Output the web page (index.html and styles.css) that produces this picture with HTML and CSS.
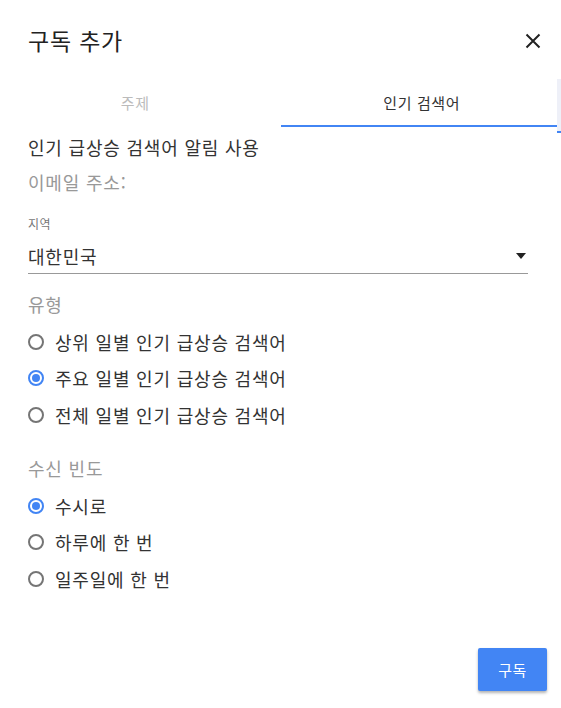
FILE: index.html
```html
<!DOCTYPE html>
<html lang="ko">
<head>
<meta charset="utf-8">
<link rel="stylesheet" href="styles.css">
</head>
<body>
<div class="dialog">
  <header class="head">
    <h1 class="title">구독 추가</h1>
    <button class="close" aria-label="닫기">
      <svg width="16" height="16" viewBox="0 0 16 16"><path d="M1.5 1.5 L14.5 14.5 M14.5 1.5 L1.5 14.5" stroke="#222" stroke-width="2" fill="none"/></svg>
    </button>
  </header>
  <div class="tabs-wrap">
    <div class="tabs">
      <div class="tab">주제</div>
      <div class="tab active">인기 검색어</div>
    </div>
    <div class="stub"></div>
  </div>
  <div class="content">
    <p class="line">인기 급상승 검색어 알림 사용</p>
    <p class="line muted">이메일 주소:</p>
    <div class="select">
      <div class="select-label">지역</div>
      <div class="select-field">
        <span>대한민국</span>
        <span class="caret"></span>
      </div>
    </div>
    <div class="group">
      <div class="group-title">유형</div>
      <label class="radio"><span class="dot"></span>상위 일별 인기 급상승 검색어</label>
      <label class="radio"><span class="dot on"></span>주요 일별 인기 급상승 검색어</label>
      <label class="radio"><span class="dot"></span>전체 일별 인기 급상승 검색어</label>
    </div>
    <div class="group">
      <div class="group-title">수신 빈도</div>
      <label class="radio"><span class="dot on"></span>수시로</label>
      <label class="radio"><span class="dot"></span>하루에 한 번</label>
      <label class="radio"><span class="dot"></span>일주일에 한 번</label>
    </div>
  </div>
  <footer class="foot">
    <button class="primary">구독</button>
  </footer>
</div>
</body>
</html>
```
FILE: styles.css
```css
* { box-sizing: border-box; }
html, body { margin: 0; padding: 0; background: #fff; }
body {
  font-family: "Noto Sans CJK KR", "Noto Sans", sans-serif;
  color: #333;
  width: 561px;
  height: 708px;
  overflow: hidden;
}
.dialog { display: flex; flex-direction: column; height: 708px; }
.head {
  display: flex;
  justify-content: space-between;
  align-items: flex-start;
  padding: 24px 18px 0 28px;
  height: 79px;
}
.title {
  margin: 0;
  font-size: 23px;
  font-weight: 400;
  line-height: 32px;
  letter-spacing: 0.8px;
  color: #222;
}
.close {
  border: 0;
  background: none;
  padding: 0;
  margin-top: 9px;
  width: 16px;
  height: 16px;
  margin-right: 2px;
  display: flex;
}
.tabs-wrap { display: flex; height: 48px; }
.tabs { display: flex; width: 557px; }
.tab {
  flex: 1;
  display: flex;
  align-items: center;
  justify-content: center;
  font-size: 15px;
  letter-spacing: 0.6px;
  color: #bbb;
  border-bottom: 2px solid transparent;
}
.tab:first-child { padding-right: 10px; }
.tab.active { color: #333; border-bottom-color: #4285f4; padding-left: 6px; }
.stub {
  width: 4px;
  background: #eef0f8;
  height: 54px;
  border-bottom: 2px solid #4285f4;
}
.content {
  padding: 3px 28px 0 28px;
  flex: 1;
  font-size: 18px;
  letter-spacing: 0.8px;
}
.line { margin: 0; line-height: 35px; }
.muted { color: #999; }
.select { margin-top: 16px; width: 500px; }
.select-label { font-size: 12px; color: #777; line-height: 16px; letter-spacing: 0.5px; }
.select-field {
  display: flex;
  align-items: center;
  justify-content: space-between;
  height: 42px;
  padding-top: 6px;
  border-bottom: 1px solid #999;
}
.caret {
  width: 0; height: 0;
  border-left: 5px solid transparent;
  border-right: 5px solid transparent;
  border-top: 6px solid #222;
  margin-right: 2px;
}
.group { margin-top: 15px; }
.group + .group { margin-top: 20px; }
.group-title { color: #999; line-height: 30px; margin-bottom: 5px; }
.radio {
  display: flex;
  align-items: center;
  gap: 11px;
  color: #333;
  height: 36.3px;
}
.dot {
  width: 16px; height: 16px;
  border: 2px solid #757575;
  border-radius: 50%;
  flex: none;
  position: relative;
}
.dot.on { border-color: #4285f4; }
.dot.on::after {
  content: "";
  position: absolute;
  left: 2px; top: 2px;
  width: 8px; height: 8px;
  border-radius: 50%;
  background: #4285f4;
}
.foot { display: flex; justify-content: flex-end; padding: 0 14px 17px 0; }
.primary {
  background: #4285f4;
  color: #fff;
  border: 0;
  border-radius: 2px;
  width: 69px;
  height: 43px;
  font-family: inherit;
  font-size: 15px;
  letter-spacing: 0.5px;
  box-shadow: 0 2px 3px rgba(0,0,0,0.3);
}
```
